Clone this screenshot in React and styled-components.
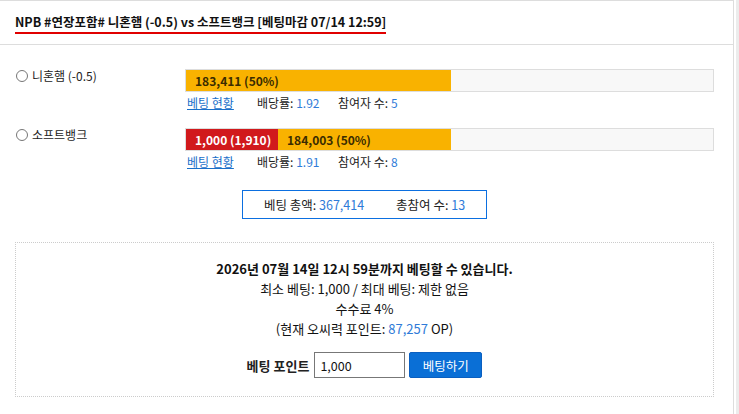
import React from 'react'
import styled, { createGlobalStyle } from 'styled-components'

const GlobalStyle = createGlobalStyle`
  body {
    margin: 0;
    background: #fff;
    font-family: "Noto Sans CJK KR", "Noto Sans", sans-serif;
    font-size: 12px;
    color: #222;
  }
`

const Page = styled.div`
  display: flex;
  height: 414px;
`

const Panel = styled.div`
  width: 733px;
  border-top: 1px solid #ddd;
  border-right: 1px solid #ddd;
`

const Track = styled.div`
  width: 3px;
  margin-left: 2px;
  background: #ececec;
`

const Header = styled.div`
  height: 43px;
  border-bottom: 1px solid #ddd;
  padding: 0 15px;
  display: flex;
  align-items: flex-start;
`

const Title = styled.h2`
  margin: 12px 0 0;
  font-size: 12.5px;
  font-weight: bold;
  line-height: 18px;
  color: #111;
  border-bottom: 2px solid #e00000;
  padding-bottom: 1px;
`

const Body = styled.div`
  padding: 24px 19px 0 15px;
`

const Option = styled.div`
  display: grid;
  grid-template-columns: 170px 1fr;
  margin-bottom: ${p => p.$gap || 0}px;
`

const Label = styled.label`
  display: flex;
  align-items: center;
  gap: 4px;
  height: 17px;
  margin-top: -2px;
  font-size: 12px;
  color: #222;

  input {
    margin: 0 0 0 1px;
    width: 12px;
    height: 12px;
  }
`

const Bar = styled.div`
  display: flex;
  height: 21px;
  border: 1px solid #ddd;
  background: #f8f8f8;
`

const Segment = styled.div`
  width: ${p => p.$w}px;
  background: ${p => (p.$red ? '#d1191c' : '#f9b200')};
  color: ${p => (p.$red ? '#fff' : '#3a2c00')};
  font-weight: bold;
  line-height: 21px;
  padding-left: 9px;
  box-sizing: border-box;
  white-space: nowrap;
`

const Stats = styled.div`
  display: flex;
  align-items: center;
  height: 20px;
  padding-left: 2px;
`

const Stat = styled.span`
  width: ${p => p.$w}px;
  color: #222;
`

const Link = styled.a`
  color: #1a6fc9;
  text-decoration: underline;
  cursor: pointer;
`

const Value = styled.span`
  color: #2f7bd8;
`

const SummaryWrap = styled.div`
  display: flex;
  justify-content: center;
  padding: 19px 0 23px;
`

const Summary = styled.div`
  display: flex;
  justify-content: center;
  align-items: center;
  gap: 32px;
  width: 243px;
  height: 27px;
  border: 1px solid #0b6fe0;
  font-size: 12.5px;
`

const Betting = styled.div`
  border: 1px dotted #ccc;
  padding: 16px 0 18px;
  text-align: center;
`

const Line = styled.div`
  line-height: 20px;
  font-size: 13px;
  font-weight: ${p => (p.$bold ? 'bold' : 'normal')};
  color: #111;
`

const Form = styled.form`
  display: flex;
  justify-content: center;
  align-items: center;
  gap: 4px;
  margin-top: 13px;
`

const FormLabel = styled.span`
  font-weight: bold;
  font-size: 13px;
  margin-right: 1px;
`

const Input = styled.input`
  width: 91px;
  height: 26px;
  box-sizing: border-box;
  border: 1px solid #777;
  padding: 0 5px;
  font-family: inherit;
  font-size: 12.5px;
  color: #111;
`

const Button = styled.button`
  height: 26px;
  width: 73px;
  border: 1px solid #0a5fc0;
  border-radius: 2px;
  background: #0a6fd6;
  color: #fff;
  font-family: inherit;
  font-size: 12.5px;
`

const options = [
  { name: '니혼햄 (-0.5)', bars: [{ w: 265, text: '183,411 (50%)' }], rate: '1.92', count: '5' },
  {
    name: '소프트뱅크',
    bars: [
      { w: 92, text: '1,000 (1,910)', red: true },
      { w: 173, text: '184,003 (50%)' },
    ],
    rate: '1.91',
    count: '8',
  },
]

export default function App() {
  return (
    <>
      <GlobalStyle />
      <Page>
        <Panel>
          <Header>
            <Title>NPB #연장포함# 니혼햄 (-0.5) vs 소프트뱅크 [베팅마감 07/14 12:59]</Title>
          </Header>
          <Body>
            {options.map((o, i) => (
              <Option key={o.name} $gap={i === 0 ? 16 : 0}>
                <Label>
                  <input type="radio" name="pick" />
                  {o.name}
                </Label>
                <div>
                  <Bar>
                    {o.bars.map(b => (
                      <Segment key={b.text} $w={b.w} $red={b.red}>
                        {b.text}
                      </Segment>
                    ))}
                  </Bar>
                  <Stats>
                    <Stat $w={70}>
                      <Link>베팅 현황</Link>
                    </Stat>
                    <Stat $w={81}>
                      배당률: <Value>{o.rate}</Value>
                    </Stat>
                    <Stat>
                      참여자 수: <Value>{o.count}</Value>
                    </Stat>
                  </Stats>
                </div>
              </Option>
            ))}
            <SummaryWrap>
              <Summary>
                <span>
                  베팅 총액: <Value>367,414</Value>
                </span>
                <span>
                  총참여 수: <Value>13</Value>
                </span>
              </Summary>
            </SummaryWrap>
            <Betting>
              <Line $bold>2026년 07월 14일 12시 59분까지 베팅할 수 있습니다.</Line>
              <Line>최소 베팅: 1,000 / 최대 베팅: 제한 없음</Line>
              <Line>수수료 4%</Line>
              <Line>
                (현재 오씨력 포인트: <Value>87,257</Value> OP)
              </Line>
              <Form onSubmit={e => e.preventDefault()}>
                <FormLabel>베팅 포인트</FormLabel>
                <Input defaultValue="1,000" />
                <Button type="submit">베팅하기</Button>
              </Form>
            </Betting>
          </Body>
        </Panel>
        <Track />
      </Page>
    </>
  )
}
